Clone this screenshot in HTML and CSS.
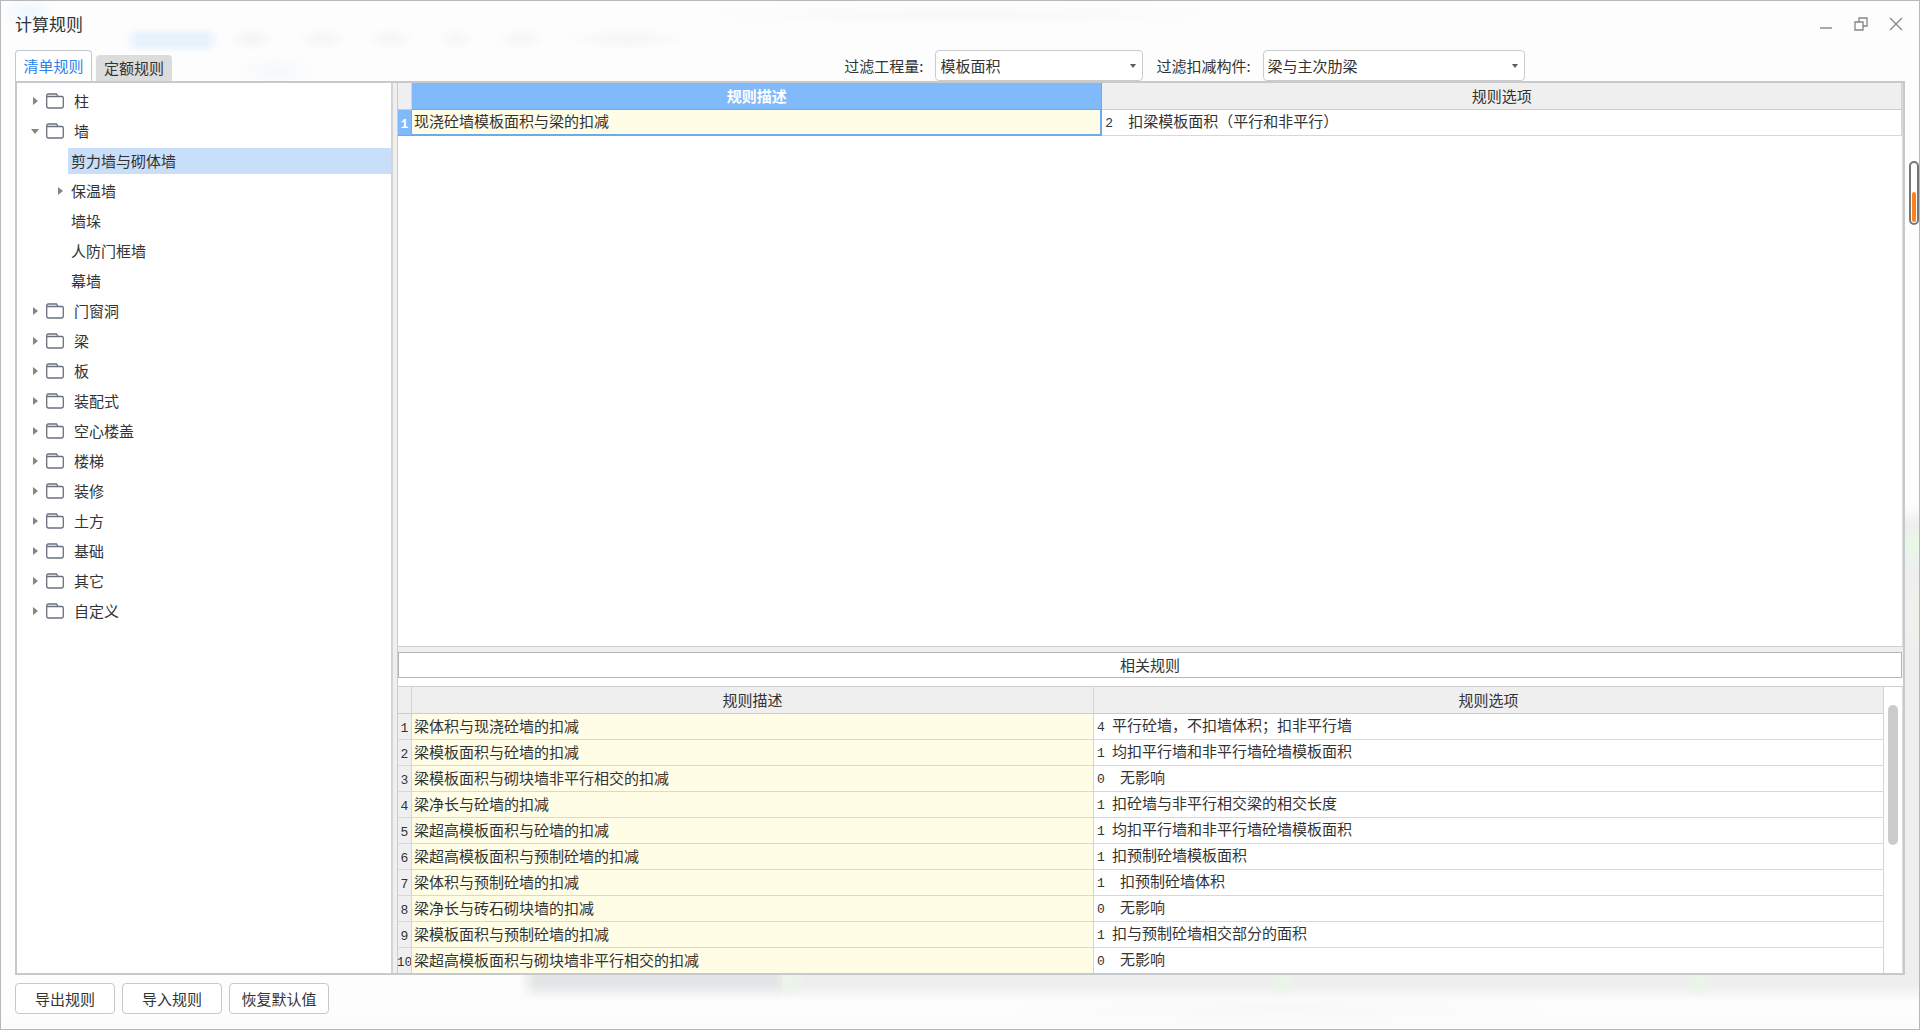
FILE: index.html
```html
<!DOCTYPE html>
<html lang="zh-CN">
<head>
<meta charset="utf-8">
<title>计算规则</title>
<link rel="stylesheet" href="styles.css">
</head>
<body>
<svg class="defs" aria-hidden="true">
  <symbol id="folder" viewBox="0 0 18 16">
    <path d="M.7 3.500V13a2 2 0 0 0 2 2h12.600a2 2 0 0 0 2-2V5a1.500 1.500 0 0 0-1.500-1.500H12L10.500 1H2.200A1.500 1.500 0 0 0 .7 2.500zh11.300" fill="none" stroke="#6b7080" stroke-width="1.300"/>
  </symbol>
  <symbol id="right" viewBox="0 0 10 10"><path d="M3 1v8l5-4z" fill="#858585"/></symbol>
  <symbol id="down" viewBox="0 0 10 10"><path d="M1 3h8L5 8z" fill="#858585"/></symbol>
</svg>
<div class="window">
  <header class="titlebar">
    <h1 class="title">计算规则</h1>
    <div class="controls">
      <button class="control" type="button" aria-label="最小化"><svg viewBox="0 0 14 14"><path d="M1 11h12" stroke="#8a8a8a" stroke-width="1.5"/></svg></button>
      <button class="control" type="button" aria-label="还原"><svg viewBox="0 0 14 14"><path d="M5 5V1h8v8H9M1 5h8v8H1z" fill="none" stroke="#858585" stroke-width="1.3"/></svg></button>
      <button class="control" type="button" aria-label="关闭"><svg viewBox="0 0 14 14"><path d="M1 1l12 12M13 1L1 13" stroke="#858585" stroke-width="1.3"/></svg></button>
    </div>
  </header>
  <div class="toolbar">
    <div class="tabs" role="tablist">
      <button class="tab active" type="button" role="tab" aria-selected="true">清单规则</button>
      <button class="tab" type="button" role="tab" aria-selected="false">定额规则</button>
    </div>
    <div class="filters">
      <label class="filter-label" for="quantity">过滤工程量:</label>
      <span class="picker quantity"><select id="quantity"><option>模板面积</option></select></span>
      <label class="filter-label" for="member">过滤扣减构件:</label>
      <span class="picker member"><select id="member"><option>梁与主次肋梁</option></select></span>
    </div>
  </div>
  <main class="panel">
    <nav class="side">
      <ul class="tree">
        <li><div class="node"><svg class="arrow"><use href="#right"/></svg><svg class="folder"><use href="#folder"/></svg>柱</div></li>
        <li><div class="node"><svg class="arrow"><use href="#down"/></svg><svg class="folder"><use href="#folder"/></svg>墙</div>
          <ul class="branch">
            <li class="leaf"><span class="name selected">剪力墙与砌体墙</span></li>
            <li class="leaf"><svg class="arrow"><use href="#right"/></svg><span class="name">保温墙</span></li>
            <li class="leaf"><span class="name">墙垛</span></li>
            <li class="leaf"><span class="name">人防门框墙</span></li>
            <li class="leaf"><span class="name">幕墙</span></li>
          </ul>
        </li>
        <li><div class="node"><svg class="arrow"><use href="#right"/></svg><svg class="folder"><use href="#folder"/></svg>门窗洞</div></li>
        <li><div class="node"><svg class="arrow"><use href="#right"/></svg><svg class="folder"><use href="#folder"/></svg>梁</div></li>
        <li><div class="node"><svg class="arrow"><use href="#right"/></svg><svg class="folder"><use href="#folder"/></svg>板</div></li>
        <li><div class="node"><svg class="arrow"><use href="#right"/></svg><svg class="folder"><use href="#folder"/></svg>装配式</div></li>
        <li><div class="node"><svg class="arrow"><use href="#right"/></svg><svg class="folder"><use href="#folder"/></svg>空心楼盖</div></li>
        <li><div class="node"><svg class="arrow"><use href="#right"/></svg><svg class="folder"><use href="#folder"/></svg>楼梯</div></li>
        <li><div class="node"><svg class="arrow"><use href="#right"/></svg><svg class="folder"><use href="#folder"/></svg>装修</div></li>
        <li><div class="node"><svg class="arrow"><use href="#right"/></svg><svg class="folder"><use href="#folder"/></svg>土方</div></li>
        <li><div class="node"><svg class="arrow"><use href="#right"/></svg><svg class="folder"><use href="#folder"/></svg>基础</div></li>
        <li><div class="node"><svg class="arrow"><use href="#right"/></svg><svg class="folder"><use href="#folder"/></svg>其它</div></li>
        <li><div class="node"><svg class="arrow"><use href="#right"/></svg><svg class="folder"><use href="#folder"/></svg>自定义</div></li>
      </ul>
    </nav>
    <div class="content">
      <section class="current">
        <table class="grid">
          <colgroup><col class="col-num"><col class="col-desc"><col></colgroup>
          <thead><tr><th></th><th class="picked">规则描述</th><th>规则选项</th></tr></thead>
          <tbody><tr><th class="picked">1</th><td class="desc focused">现浇砼墙模板面积与梁的扣减</td><td><span class="code wide">2</span>扣梁模板面积（平行和非平行）</td></tr></tbody>
        </table>
      </section>
      <h2 class="caption">相关规则</h2>
      <section class="related">
        <table class="grid">
          <colgroup><col class="col-num"><col class="col-desc"><col></colgroup>
          <thead><tr><th></th><th>规则描述</th><th>规则选项</th></tr></thead>
          <tbody>
            <tr><th>1</th><td class="desc">梁体积与现浇砼墙的扣减</td><td><span class="code">4</span>平行砼墙，不扣墙体积；扣非平行墙</td></tr>
            <tr><th>2</th><td class="desc">梁模板面积与砼墙的扣减</td><td><span class="code">1</span>均扣平行墙和非平行墙砼墙模板面积</td></tr>
            <tr><th>3</th><td class="desc">梁模板面积与砌块墙非平行相交的扣减</td><td><span class="code wide">0</span>无影响</td></tr>
            <tr><th>4</th><td class="desc">梁净长与砼墙的扣减</td><td><span class="code">1</span>扣砼墙与非平行相交梁的相交长度</td></tr>
            <tr><th>5</th><td class="desc">梁超高模板面积与砼墙的扣减</td><td><span class="code">1</span>均扣平行墙和非平行墙砼墙模板面积</td></tr>
            <tr><th>6</th><td class="desc">梁超高模板面积与预制砼墙的扣减</td><td><span class="code">1</span>扣预制砼墙模板面积</td></tr>
            <tr><th>7</th><td class="desc">梁体积与预制砼墙的扣减</td><td><span class="code wide">1</span>扣预制砼墙体积</td></tr>
            <tr><th>8</th><td class="desc">梁净长与砖石砌块墙的扣减</td><td><span class="code wide">0</span>无影响</td></tr>
            <tr><th>9</th><td class="desc">梁模板面积与预制砼墙的扣减</td><td><span class="code">1</span>扣与预制砼墙相交部分的面积</td></tr>
            <tr><th><span class="clip">10</span></th><td class="desc">梁超高模板面积与砌块墙非平行相交的扣减</td><td><span class="code wide">0</span>无影响</td></tr>
          </tbody>
        </table>
        <div class="scrollbar"><div class="thumb"></div></div>
      </section>
    </div>
  </main>
  <footer class="footer">
    <button class="action" type="button">导出规则</button>
    <button class="action" type="button">导入规则</button>
    <button class="action" type="button">恢复默认值</button>
  </footer>
  <div class="gauge"><div class="level"></div></div>
</div>
</body>
</html>
```
FILE: styles.css
```css
* { box-sizing: border-box; }

body {
  margin: 0;
  color: #333;
  font: 15px/20px "Noto Sans CJK SC", sans-serif;
}

button, select { font: inherit; color: inherit; }
ul { margin: 0; padding: 0; list-style: none; }
.defs { display: none; }

.window {
  position: relative;
  display: flex;
  flex-direction: column;
  min-height: 100vh;
  padding: 0 14px;
  border: 1px solid #b8b8b8;
  background:
    linear-gradient(90deg, #fdfdfd, #fdfdfd00 12px, #fdfdfd00 82px, #fdfdfd) 124px 26px / 94px 26px no-repeat,
    linear-gradient(#fdfdfd, #e8f2fd 8px, #e8f2fd 18px, #fdfdfd) 124px 26px / 94px 26px no-repeat,
    radial-gradient(ellipse 30px 20px at 28px 12px, #edf7fd, transparent) no-repeat,
    radial-gradient(ellipse 24px 12px at 250px 38px, #f4f4f4, transparent) no-repeat,
    radial-gradient(ellipse 26px 12px at 322px 38px, #f5f5f5, transparent) no-repeat,
    radial-gradient(ellipse 24px 12px at 390px 38px, #f5f5f5, transparent) no-repeat,
    radial-gradient(ellipse 20px 12px at 455px 38px, #f6f6f6, transparent) no-repeat,
    radial-gradient(ellipse 26px 12px at 520px 38px, #f6f6f6, transparent) no-repeat,
    radial-gradient(ellipse 60px 12px at 625px 38px, #f5f5f5, transparent) no-repeat,
    radial-gradient(ellipse 40px 18px at 275px 70px, #f5f8fc, transparent) no-repeat,
    radial-gradient(ellipse 280px 12px at 960px 14px, #f8f8f8, transparent) no-repeat,
    radial-gradient(ellipse 16px 20px at 790px calc(100% - 48px), #e9f7e9, transparent) no-repeat,
    radial-gradient(ellipse 16px 20px at 1280px calc(100% - 48px), #e9f7e9, transparent) no-repeat,
    radial-gradient(ellipse 16px 20px at 1698px calc(100% - 48px), #e9f7e9, transparent) no-repeat,
    radial-gradient(ellipse 300px 18px at 1280px calc(100% - 20px), #f8f8f8, transparent) no-repeat,
    linear-gradient(#fff0, #f9fbfc) bottom / 100% 12px no-repeat,
    linear-gradient(90deg, #fdfdfd, #fdfdfd00) 518px calc(100% - 26px) / 16px 30px no-repeat,
    linear-gradient(#e4e5e6 40%, #fff0) 518px calc(100% - 28px) / 263px 28px no-repeat,
    linear-gradient(#eee 45%, #fff0) 781px calc(100% - 28px) / 100% 28px no-repeat,
    linear-gradient(#fff0, #eee 20px, #e8f8e8 38px, #eee 66px, #f0f1eb 110px, #eee 160px, #eee) right calc(100% - 54px) / 14px 470px no-repeat,
    #fdfdfd;
}

.titlebar {
  display: flex;
  align-items: center;
  justify-content: space-between;
  height: 49px;
  padding: 0 2px 3px 0;
}

.title { margin: 0; font-size: 17px; font-weight: 400; line-height: 24px; }
.controls { display: flex; gap: 21px; }

.control {
  width: 14px;
  height: 14px;
  padding: 0;
  border: 0;
  background: none;
}

.control svg { display: block; width: 14px; height: 14px; }

.toolbar {
  display: flex;
  align-items: flex-end;
  justify-content: space-between;
  height: 31px;
  padding-right: 3px;
}

.tabs { display: flex; align-items: flex-end; gap: 4px; }

.tab {
  width: 76px;
  height: 26px;
  padding: 0;
  border: 0;
  border-radius: 4px 4px 0 0;
  background: #dcdcdc;
}

.tab.active {
  width: 77px;
  height: 31px;
  border: 1px solid #c4c8ce;
  border-bottom: 0;
  background: #fff;
  color: #2b83ee;
}

.filters { display: flex; align-items: center; padding-right: 20%; }
.filter-label { padding-right: 12px; }
.picker { position: relative; height: 31px; }
.quantity { width: 208px; margin-right: 13px; }
.member { width: 262px; }

.picker select {
  width: 100%;
  height: 100%;
  padding: 0 4px;
  border: 1px solid #ccc;
  border-radius: 4px;
  background: #fff;
  appearance: none;
}

.picker::after {
  content: "";
  position: absolute;
  top: 14px;
  right: 7px;
  border: 3px solid transparent;
  border-top: 4px solid #555b68;
  border-bottom: 0;
}

.panel {
  display: flex;
  flex: 1;
  border: 2px solid #c6c9cd;
  background: #efefef;
}

.side {
  flex: none;
  width: 376px;
  padding-top: 3px;
  border-right: 2px solid #d4d4d4;
  background: #fff;
}

.node { display: flex; align-items: center; height: 30px; padding-left: 13px; }
.arrow { flex: none; width: 10px; height: 10px; }
.folder { flex: none; width: 18px; height: 16px; margin: 0 10px 0 6px; }

.leaf {
  display: flex;
  align-items: center;
  justify-content: flex-end;
  height: 30px;
}

.leaf .arrow { margin-right: 3px; }
.name { width: 323px; padding: 3px; }
.selected { background: #c9dff9; }

.content {
  display: flex;
  flex: 1;
  flex-direction: column;
  min-width: 0;
  margin-left: 4px;
  border-left: 1px solid #ccc;
}

.current {
  flex: 1;
  border-right: 1px solid #dcdcdc;
  border-bottom: 1px solid #d0d0d0;
  background: #fff;
}

.caption {
  height: 26px;
  margin: 5px 1px 0 0;
  border: 1px solid #b5b5b5;
  background: #fff;
  font-size: 15px;
  font-weight: 400;
  line-height: 24px;
  text-align: center;
}

.related {
  display: flex;
  border-top: 8px solid #fff;
  background: #fff;
}

.grid {
  flex: 1;
  width: 100%;
  table-layout: fixed;
  border-collapse: separate;
  border-spacing: 0;
}

.col-num { width: 14px; }
.col-desc { width: 45.9%; }

.grid th, .grid td {
  height: 26px;
  padding: 0;
  border-right: 1px solid #d4d4d4;
  border-bottom: 1px solid #d8d8d8;
  overflow: hidden;
  white-space: nowrap;
}

.grid th { background: #efefef; font-weight: 400; }
.grid thead th { height: 27px; border-bottom-color: #ccc; }
.related thead th { height: 28px; border-top: 1px solid #d0d0d0; }
.related tbody tr:last-child > * { height: 25px; border-bottom: 0; }

.grid tbody th, .code {
  font-family: "Liberation Mono", monospace;
  font-size: 13px;
}

.grid tbody th { padding-top: 4px; }
.grid td { padding: 0 3px; text-align: left; }
.grid .desc { padding: 0 2px 2px; background: #fffde6; }
.grid td.focused { border-right: 2px solid #6aabee; border-bottom: 2px solid #6aabee; }

.grid th.picked {
  border-color: #6aabee;
  background: #80bafa;
  color: #fff;
  font-weight: 700;
}

.code { display: inline-block; width: 15px; }
.code.wide { width: 23px; }
.clip { display: flex; justify-content: center; }

.scrollbar {
  flex: none;
  width: 19px;
  padding: 18px 4px 0;
  border-top: 1px solid #d0d0d0;
  border-right: 1px solid #dcdcdc;
}

.thumb { height: 140px; border-radius: 5px; background: #cbcbcb; }

.footer { display: flex; gap: 7px; padding: 8px 0 15px; }

.action {
  width: 100px;
  height: 31px;
  padding: 0;
  border: 1px solid #c8c8c8;
  border-radius: 4px;
  background: #fff;
}

.gauge {
  position: absolute;
  top: 160px;
  right: 0;
  width: 10px;
  height: 64px;
  padding: 29px 1px 0;
  border: 2px solid #777;
  border-radius: 5px;
  background: #fff;
}

.level { height: 30px; border-radius: 2px; background: #ff7f1a; }
```
